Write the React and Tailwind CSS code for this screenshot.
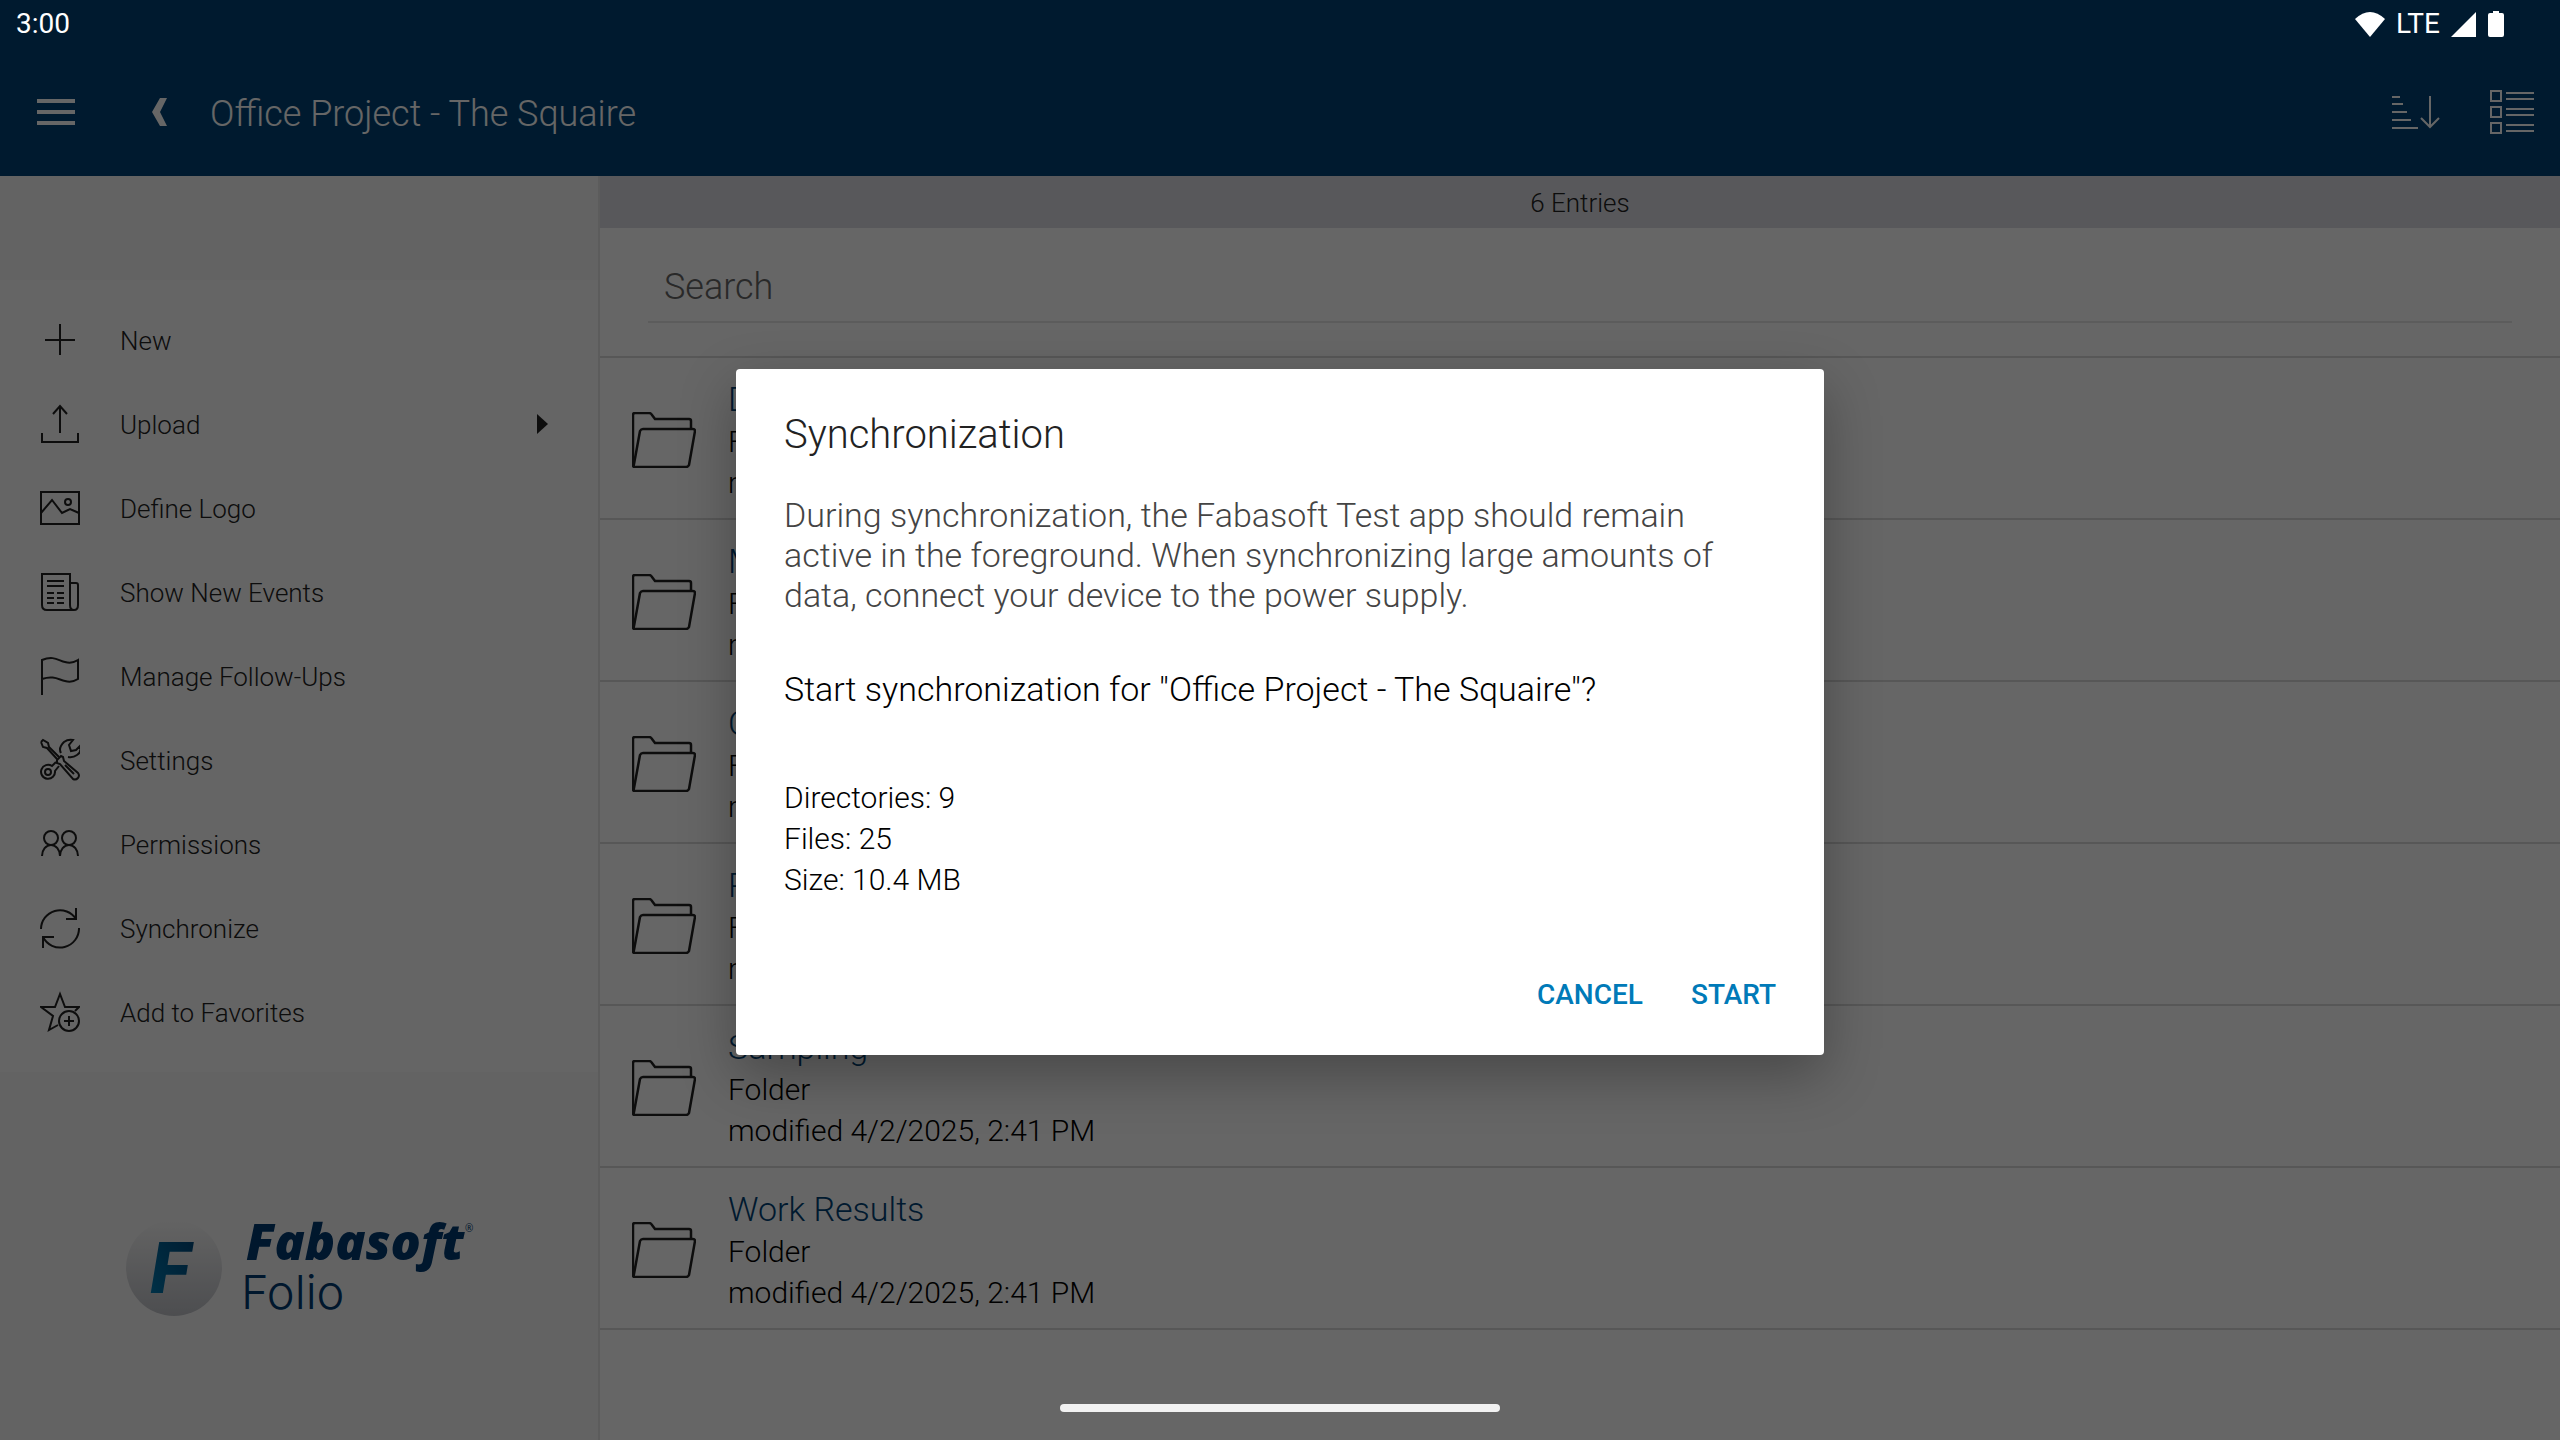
import React, { useState } from "react";

const entries = [
  "Documentation",
  "Minutes",
  "Contracts",
  "Planning",
  "Sampling",
  "Work Results",
];

// thin line icons, all drawn on a 40x48 grid
const icons = {
  new: <path d="M20 8v31M5 24h30" />,
  upload: (
    <>
      <path d="M20 33V6M13 14l7-8 7 8" />
      <path d="M2 33v9h36v-9" />
    </>
  ),
  logo: (
    <>
      <rect x="1" y="8" width="38" height="32" />
      <path d="M1 29l11-13 10 13 8-4 9 4" />
      <circle cx="28" cy="18" r="3" />
    </>
  ),
  events: (
    <>
      <path d="M34 42H7q-5 0-5-5V6h28v31q0 5 4 5t4-5V17q0-2-2-2h-6" />
      <path d="M7 13h17M7 18h17" />
      <path d="M7 25h7M17 25h7M7 30h7M17 30h7M7 35h7M17 35h7" />
    </>
  ),
  followUps: <path d="M2 43V8C14 3 19 9 25 10q7 2 13-2v19q-6 4-13 2C19 28 14 23 2 27" />,
  settings: (
    <>
      <path d="M1 6l2-2 5 3 1 4 10 10M1 6l2 5 4 1 10 11" />
      <path d="M17 27v-3l4-4 2 1 1 4 14 12a4 4 0 0 1-5 6L20 28zM25 29l9 9" />
      <path d="M21 17q-3-5 3-11 4-3 9-2l-4 5 2 6 5-1 4-4q2 6-3 9-4 3-9 2" />
      <path d="M16 26l-4 4a7 7 0 1 0 3 5l4-5" />
      <circle cx="8" cy="36" r="3" />
    </>
  ),
  permissions: (
    <>
      <circle cx="11" cy="18" r="7" />
      <circle cx="29" cy="18" r="7" />
      <path d="M2 36a9 11 0 0 1 18 0a9 11 0 0 1 18 0" />
    </>
  ),
  sync: (
    <>
      <path d="M1 25A19 19 0 0 1 36 15M36 4v11H26" />
      <path d="M39 24A19 19 0 0 1 3 33M3 44V33h11" />
    </>
  ),
  favorites: (
    <>
      <path d="M18 37L9 42l4-14L1 19h14l5-13 5 13h14l-4 4" />
      <circle cx="29" cy="33" r="10" />
      <path d="M29 28v10M24 33h10" />
    </>
  ),
};

const actions = [
  { label: "New", icon: icons.new },
  { label: "Upload", icon: icons.upload, submenu: true },
  { label: "Define Logo", icon: icons.logo },
  { label: "Show New Events", icon: icons.events },
  { label: "Manage Follow-Ups", icon: icons.followUps },
  { label: "Settings", icon: icons.settings },
  { label: "Permissions", icon: icons.permissions },
  { label: "Synchronize", icon: icons.sync },
  { label: "Add to Favorites", icon: icons.favorites },
];

function StatusBar() {
  return (
    <div className="relative z-20 h-12 shrink-0 flex items-center justify-between pl-4 pr-[52px] text-white text-[28px] leading-[48px]">
      <span>3:00</span>
      <div className="flex items-center gap-2">
        <svg className="w-[30px] h-[25px]" viewBox="0 0 30 25" fill="currentColor">
          <path d="M15 25L0 7Q15-7 30 7z" />
        </svg>
        <span className="px-[3px]">LTE</span>
        <svg className="w-[25px] h-[25px]" viewBox="0 0 25 25" fill="currentColor">
          <path d="M25 0v25H0z" />
        </svg>
        <svg className="w-[24px] h-[26px]" viewBox="0 0 24 26" fill="currentColor">
          <path d="M5 2h4V0h6v2h3q2 0 2 2v20q0 2-2 2H6q-2 0-2-2V4q0-2 2-2z" />
        </svg>
      </div>
    </div>
  );
}

function Header() {
  return (
    <header className="bg-[#004376] shrink-0 flex flex-col">
      <StatusBar />
      <div className="h-32 flex items-center text-white pl-9 pr-6">
        <button type="button" aria-label="Menu" className="w-10 h-10 flex items-center justify-center">
          <svg className="w-[38px] h-[26px]" viewBox="0 0 38 26" fill="currentColor">
            <path d="M0 0h38v4H0zM0 11h38v4H0zM0 22h38v4H0z" />
          </svg>
        </button>
        <button type="button" aria-label="Back" className="ml-[76px] w-4 h-10 flex items-center">
          <svg className="w-[15px] h-[28px]" viewBox="0 0 15 28" fill="currentColor">
            <path d="M8 0h7L8 14l7 14H8L0 14z" />
          </svg>
        </button>
        <h1 className="ml-[42px] pt-1 flex-1 text-[36px] leading-[44px] font-light">
          Office Project - The Squaire
        </h1>
        <button type="button" aria-label="Sort" className="w-12 h-11 flex items-center">
          <svg className="w-12 h-[34px]" viewBox="0 0 48 34" fill="none" stroke="currentColor" strokeWidth="2">
            <path d="M0 2h8M0 9h11M0 17h15M0 25h19M0 33h26M38 1v31M29 23l9 9 9-9" />
          </svg>
        </button>
        <button type="button" aria-label="View" className="ml-[50px] w-[46px] h-11 flex items-center">
          <svg className="w-[44px] h-[44px]" viewBox="0 0 44 44" fill="none" stroke="currentColor" strokeWidth="2">
            <path d="M1 1h10v10H1zM1 17h10v10H1zM1 33h10v10H1z" />
            <path d="M16 3h28M16 9h28M16 19h28M16 25h28M16 35h28M16 41h28" />
          </svg>
        </button>
      </div>
    </header>
  );
}

function Brand() {
  return (
    <div className="flex-1 flex items-center justify-center pt-6">
      <svg className="w-[350px] h-[150px]" viewBox="0 0 350 150">
        <defs>
          <linearGradient id="disc" x1="0" y1="0" x2="0" y2="1">
            <stop offset="0" stopColor="#f8f8f8" />
            <stop offset="1" stopColor="#c0c2c8" />
          </linearGradient>
          <linearGradient id="mark" x1="0" y1="1" x2="1" y2="0">
            <stop offset="0" stopColor="#0080b8" />
            <stop offset="1" stopColor="#004376" />
          </linearGradient>
        </defs>
        <circle cx="50" cy="75" r="48" fill="url(#disc)" />
        <text x="26" y="100" fontFamily="Inter" fontSize="70" fontWeight="800" fontStyle="italic" fill="url(#mark)">
          F
        </text>
        <text x="122" y="67" fontFamily="Open Sans" fontSize="50" fontWeight="800" fontStyle="italic" fill="#003a72">
          Fabasoft
        </text>
        <text x="341" y="39" fontFamily="Open Sans" fontSize="10" fill="#003a72">
          ®
        </text>
        <text x="117" y="116" fontFamily="Inter" fontSize="47" fontWeight="300" fill="#003a72">
          Folio
        </text>
      </svg>
    </div>
  );
}

function Sidebar() {
  return (
    <aside className="w-[600px] shrink-0 bg-[#f8f8f8] border-r-2 border-[#e6e6e6] pt-[104px] flex flex-col">
      <nav className="bg-[#fcfcfc] py-[18px]">
        {actions.map(({ label, icon, submenu }) => (
          <button
            key={label}
            type="button"
            className="w-full h-[84px] pl-10 pr-[50px] flex items-center text-left text-[26px] leading-8 font-light text-[#222]"
          >
            <svg
              className="w-10 h-12 mr-10"
              viewBox="0 0 40 48"
              fill="none"
              stroke="#222"
              strokeWidth="2"
            >
              {icon}
            </svg>
            <span className="flex-1 pt-0.5">{label}</span>
            {submenu && (
              <svg className="w-[11px] h-[20px]" viewBox="0 0 11 20" fill="#222">
                <path d="M0 0l11 10L0 20z" />
              </svg>
            )}
          </button>
        ))}
      </nav>
      <Brand />
    </aside>
  );
}

function FolderIcon() {
  return (
    <svg className="w-16 h-14 shrink-0" viewBox="0 0 64 56" fill="none" stroke="#222" strokeWidth="2.5" strokeLinejoin="round">
      <path d="M59 17V9q0-2-2-2H23l-3-4q-1-2-3-2H3Q1 1 1 3v50q0 2 2 2" />
      <path d="M8 19q1-2 3-2h50q2 0 2 2l-6 34q-1 2-3 2H3q-2 0-1-3z" />
    </svg>
  );
}

function EntryList() {
  return (
    <main className="flex-1 min-w-0 bg-white">
      <div className="h-[52px] bg-[#dcdde4] text-center text-[26px] leading-[54px] font-light text-[#222]">
        6 Entries
      </div>
      <div className="h-32 px-12 pt-6">
        <input
          type="text"
          aria-label="Search"
          placeholder="Search"
          className="w-full h-[71px] px-4 text-[36px] font-light border-b-2 border-[#e6e6e6] bg-transparent outline-none placeholder:text-[#666] placeholder:opacity-100"
        />
      </div>
      <ul className="border-t-2 border-[#dadada]">
        {entries.map((name) => (
          <li key={name} className="h-[162px] pl-8 pt-1 flex items-center gap-8 border-b-2 border-[#dadada]">
            <FolderIcon />
            <div className="font-light text-[30px] leading-[41px] text-black">
              <a href="#" className="block text-[34px] leading-[44px] text-[#004376]">
                {name}
              </a>
              <p>Folder</p>
              <p>modified 4/2/2025, 2:41 PM</p>
            </div>
          </li>
        ))}
      </ul>
    </main>
  );
}

function SyncDialog({ onClose }) {
  return (
    <div className="absolute inset-0 z-10 bg-black/60 pt-12 pb-16 flex items-center justify-center">
      <div
        role="dialog"
        aria-labelledby="sync-title"
        className="w-[1088px] bg-white rounded shadow-[0_20px_56px_rgba(0,0,0,0.3)] px-12 pt-10 pb-9 font-light text-black"
      >
        <h2 id="sync-title" className="text-[40px] leading-[52px] text-[#222]">
          Synchronization
        </h2>
        <p className="mt-[34px] text-[34px] leading-[40px] text-[#444]">
          During synchronization, the Fabasoft Test app should remain active in the foreground. When
          synchronizing large amounts of data, connect your device to the power supply.
        </p>
        <p className="mt-[54px] text-[34px] leading-[40px]">
          Start synchronization for "Office Project - The Squaire"?
        </p>
        <div className="mt-[68px] text-[30px] leading-[41px]">
          <p>Directories: 9</p>
          <p>Files: 25</p>
          <p>Size: 10.4 MB</p>
        </div>
        <div className="mt-[71px] flex justify-end gap-12 text-[28px] leading-[48px] font-medium text-[#007ab8]">
          <button type="button" onClick={onClose}>CANCEL</button>
          <button type="button" onClick={onClose}>START</button>
        </div>
      </div>
    </div>
  );
}

function App() {
  const [open, setOpen] = useState(true);

  return (
    <div className="relative min-h-screen flex flex-col font-['Roboto',sans-serif]">
      <Header />
      <div className="flex-1 flex">
        <Sidebar />
        <EntryList />
      </div>
      {open && <SyncDialog onClose={() => setOpen(false)} />}
      {/* gesture bar */}
      <div className="absolute z-20 bottom-7 left-1/2 -translate-x-1/2 w-[440px] h-2 rounded-full bg-[#f2f2f2]" />
    </div>
  );
}

export default App;
